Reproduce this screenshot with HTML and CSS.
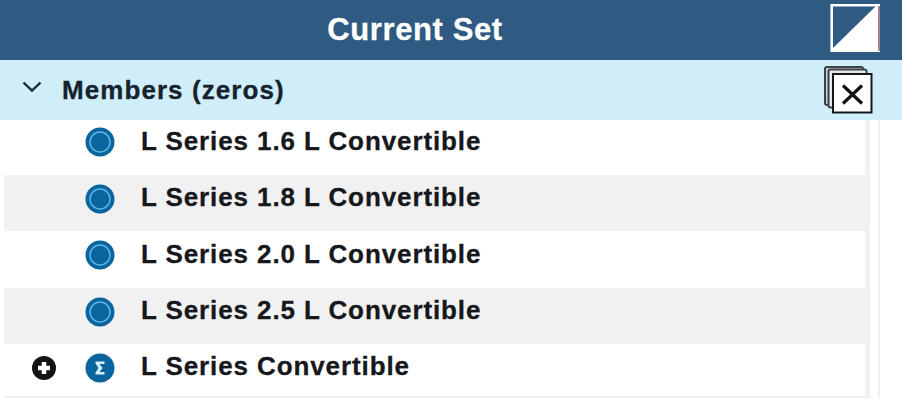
FILE: index.html
```html
<!DOCTYPE html>
<html lang="en">
<head>
<meta charset="utf-8">
<title>Current Set</title>
<link rel="stylesheet" href="styles.css">
</head>
<body>
<div class="panel">
  <header class="title-bar">
    <h1 class="title">Current Set</h1>
    <svg class="corner-icon" width="50" height="48" viewBox="0 0 50 48">
      <rect x="0" y="0" width="50" height="48" fill="#fff"/>
      <path d="M3 2.500H45.500L3 44Z" fill="#2f5a82"/>
      <path d="M0.500 0V48" stroke="#a9b6e0" fill="none"/>
      <path d="M49 2V47" stroke="#a87f94" stroke-width="2" fill="none"/>
    </svg>
  </header>
  <div class="group-bar">
    <svg class="chevron" width="20" height="12" viewBox="0 0 20 12"><path d="M1.500 1.500L10 9.500L18.500 1.500" fill="none" stroke="#1c2b36" stroke-width="2.400"/></svg>
    <span class="group-label">Members (zeros)</span>
    <svg class="clear-icon" width="50" height="50" viewBox="0 0 50 50">
      <rect x="1" y="2" width="38" height="38" rx="2" fill="#cdd2d4" stroke="#3a4148" stroke-width="2"/>
      <rect x="4.500" y="4.500" width="38" height="38" rx="2" fill="#e6e8e9" stroke="#3a4148" stroke-width="2"/>
      <rect x="9" y="9" width="38.500" height="38.500" fill="#fff" stroke="#14181c" stroke-width="2"/>
      <path d="M19 20.500L38 38.500M38 20.500L19 38.500" stroke="#111" stroke-width="3.200" fill="none"/>
    </svg>
  </div>
  <div class="content">
    <ul class="rows">
      <li class="row first">
        <span class="slot"></span>
        <svg class="dot" width="30" height="30" viewBox="0 0 30 30"><circle cx="15" cy="15" r="14.500" fill="#0a659f"/><circle cx="15" cy="15" r="10" fill="#0a659f" stroke="#5fb3e6" stroke-width="1.500"/></svg>
        <span class="name">L Series 1.6 L Convertible</span>
      </li>
      <li class="row alt">
        <span class="slot"></span>
        <svg class="dot" width="30" height="30" viewBox="0 0 30 30"><circle cx="15" cy="15" r="14.500" fill="#0a659f"/><circle cx="15" cy="15" r="10" fill="#0a659f" stroke="#5fb3e6" stroke-width="1.500"/></svg>
        <span class="name">L Series 1.8 L Convertible</span>
      </li>
      <li class="row plain">
        <span class="slot"></span>
        <svg class="dot" width="30" height="30" viewBox="0 0 30 30"><circle cx="15" cy="15" r="14.500" fill="#0a659f"/><circle cx="15" cy="15" r="10" fill="#0a659f" stroke="#5fb3e6" stroke-width="1.500"/></svg>
        <span class="name">L Series 2.0 L Convertible</span>
      </li>
      <li class="row alt">
        <span class="slot"></span>
        <svg class="dot" width="30" height="30" viewBox="0 0 30 30"><circle cx="15" cy="15" r="14.500" fill="#0a659f"/><circle cx="15" cy="15" r="10" fill="#0a659f" stroke="#5fb3e6" stroke-width="1.500"/></svg>
        <span class="name">L Series 2.5 L Convertible</span>
      </li>
      <li class="row last">
        <span class="slot">
          <svg width="24" height="24" viewBox="0 0 24 24"><circle cx="12" cy="12" r="12" fill="#141414"/><path d="M12 6V18M6 12H18" stroke="#fff" stroke-width="4.500" fill="none"/></svg>
        </span>
        <svg class="dot" width="30" height="30" viewBox="0 0 30 30"><circle cx="15" cy="15" r="14.500" fill="#0a659f"/><path d="M10.500 8.500H19.500V11H14.500L17.500 15L14.500 19H19.500V21.500H10.500V19.500L13.500 15L10.500 10.500Z" fill="#d6eefa"/></svg>
        <span class="name">L Series Convertible</span>
      </li>
    </ul>
    <div class="rail"></div>
  </div>
</div>
</body>
</html>
```

FILE: styles.css
```css
* { box-sizing: border-box; }
html, body { margin: 0; padding: 0; background: #fff; }
body { width: 902px; height: 406px; overflow: hidden; font-family: "Liberation Sans", Arial, sans-serif; }
.panel { width: 902px; display: flex; flex-direction: column; }
.title-bar { position: relative; height: 60px; background: #2f5a82; display: flex; align-items: center; justify-content: center; padding: 0 72px 2px 0; }
.title { margin: 0; color: #fff; font-size: 31px; font-weight: 700; line-height: 1; letter-spacing: 0.6px; -webkit-text-stroke: 0.3px #fff; }
.corner-icon { position: absolute; left: 830px; top: 4px; }
.group-bar { position: relative; height: 60px; background: #cfeefa; display: flex; align-items: center; padding-left: 22px; }
.group-label { margin-left: 20px; color: #16222c; font-size: 26px; font-weight: 700; letter-spacing: 1.07px; -webkit-text-stroke: 0.3px #16222c; }
.chevron { margin-top: -7px; }
.clear-icon { position: absolute; left: 824px; top: 5px; }
.content { display: flex; height: 286px; padding-left: 4px; }
.rows { list-style: none; margin: 0; padding: 0; width: 866px; height: 278px; border-right: 5px solid #f1f1f1; border-bottom: 2px solid #f1f1f1; }
.row { display: flex; align-items: center; padding-bottom: 9px; }
.row.first { height: 55px; padding-bottom: 11px; }
.row.alt { height: 56px; background: #f1f1f1; }
.row.plain { height: 57px; }
.row.last { height: 52px; padding-bottom: 5px; }
.slot { width: 81px; display: flex; justify-content: center; flex: none; padding-right: 2px; }
.dot { flex: none; }
.name { margin: -2px 0 0 26px; color: #16181c; font-size: 26px; font-weight: 700; letter-spacing: 0.9px; white-space: nowrap; -webkit-text-stroke: 0.3px #16181c; }
.rail { width: 10px; border-right: 2px solid #f1f1f1; height: 278px; }
```
